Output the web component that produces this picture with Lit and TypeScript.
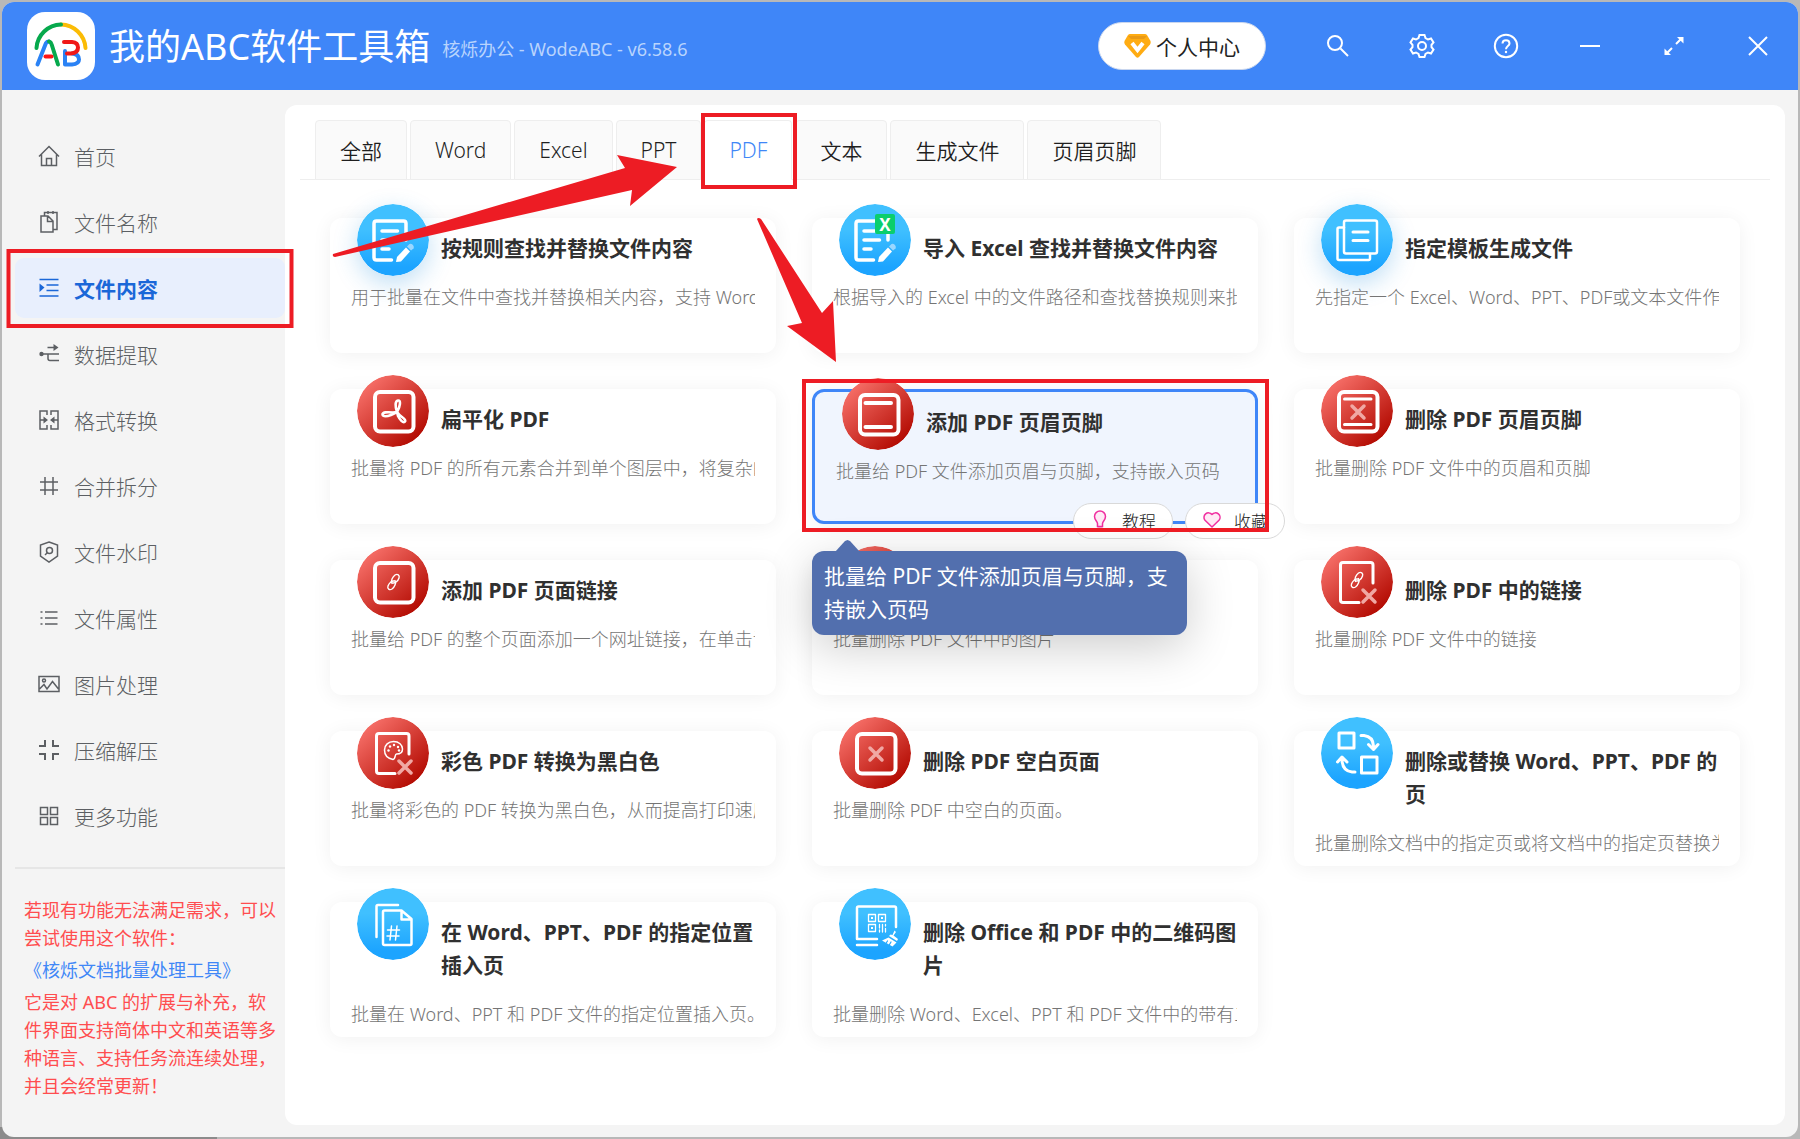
import { LitElement, html, svg, css, nothing, TemplateResult, SVGTemplateResult } from "lit";
import { customElement, property, state } from "lit/decorators.js";
import { classMap } from "lit/directives/class-map.js";

const shared = css`
  button { font: inherit; color: inherit; border: 0; background: none; padding: 0; cursor: pointer; }
  a { color: inherit; text-decoration: none; }
  svg { display: block; flex: none; }
`;

/* ---------- sidebar glyphs, drawn around the centre of a 24px box ---------- */
const navGlyphs: Record<string, SVGTemplateResult> = {
  home: svg`<path d="M-10 .5 0-9.5 10 .5M-7.5-1.5V9.5H7.5V-1.5M-2.5 9.5V2.5H2.5V9.5"/>`,
  files: svg`<path d="M-8-6H-1L4-1V10H-8ZM-1.5-6V-.5H4M-4.500-6V-9.500H8V7.500H4.500M-1-11V-8M4-11V-8"/>`,
  content: svg`<path d="M-9.500-8.500H9.500M-2.500-3H9.500M-2.500 2.500H9.500M-9.500 8H9.500"/><path class="solid" d="M-9.500-4.500-4.500-.5-9.500 4Z"/>`,
  extract: svg`<circle class="solid" cx="-7.500" cy="0" r="2.200"/><path d="M-7.500 0H10M-1.500-6.500H6M-1 0V4.500Q-1 6.500 1 6.500H10"/><path class="solid" d="M4.500-10 9.500-6.500 4.500-3Z"/>`,
  convert: svg`<path d="M-2-5V-9H-9V9H-2V5M2-5V-9H9V9H2V5M-9 0H-4M9 0H4"/><path class="solid" d="M-5.500-3.500-1 0-5.500 3.500ZM5.500-3.500 1 0 5.500 3.500Z"/>`,
  hash: svg`<path d="M-4-9V9M4-9V9M-9-4H9M-9 4H9"/>`,
  shield: svg`<path d="M0-10 8.500-7V4L0 10-8.500 4V-7Z"/><circle cx=".5" cy="-1.500" r="3"/><path d="M-1.500 .5-4 3"/>`,
  list: svg`<path d="M-4-6H8.500M-4 0H8.500M-4 6H8.500M-8.500-6H-6.500M-8.500 0H-6.500M-8.500 6H-6.500"/>`,
  image: svg`<path d="M-10-7.500H10V7.500H-10ZM-9.500 5-5 .5-2 5 3.500-2.500 9.500 5"/><circle cx="-5" cy="-3.500" r="1.500"/>`,
  zip: svg`<path d="M-10-4H-4V-10M10-4H4V-10M-10 4H-4V10M10 4H4V10" stroke-width="2"/>`,
  more: svg`<path d="M-8.500-8.500H-1.500V-1.500H-8.500ZM1.500-8.500H8.500V-1.500H1.500ZM-8.500 1.500H-1.500V8.500H-8.500ZM1.500 1.500H8.500V8.500H1.500Z"/>`,
};

/* ---------- card glyphs, drawn in the 72px disc ---------- */
const frame = svg`<rect x="18" y="17" width="38.500" height="39.500" rx="5" stroke-width="4"/>`;
const chain = (x: number, y: number) => svg`<g transform="translate(${x} ${y})" stroke-width="1.400">
  <path d="M-1.500 1.500C-3-1 -1-5 1.500-7 4-8.500 6.500-7 5.500-4 4.500-1 1.500 1.500-.5 1"/>
  <path d="M1.500-1.500C3 1 1 5-1.500 7-4 8.500-6.500 7-5.500 4-4.500 1-1.500-1.500 .5-1"/></g>`;
const cross = (x: number, y: number, r = 6) => svg`<path class="faint" stroke-width="3.500" d="M${x - r} ${y - r}L${x + r} ${y + r}M${x + r} ${y - r}L${x - r} ${y + r}"/>`;
const openDoc = svg`<path stroke-width="3" d="M52 37V19Q52 16.500 49.500 16.500H22Q19.500 16.500 19.500 19V54Q19.500 56.500 22 56.500H38"/>`;
const pencil = svg`<path class="solid" d="M39 58 40 53 49 43.500 53 47.500 44 57.500Z"/><path class="solid soft" d="M50 42.500 52.500 40Q54 39 56 41 57.500 43 56.500 44.500L54 46.500Z"/>`;
const editDoc = svg`<path stroke-width="3.500" d="M49 36V19.500Q49 17 46.500 17H19.500Q17 17 17 19.500V53.500Q17 56 19.500 56H34.500M25 27H40.500M25 36H40.500M25 45H32"/>${pencil}`;

const cardGlyphs: Record<string, SVGTemplateResult> = {
  edit: editDoc,
  editExcel: svg`${editDoc}<rect x="36" y="10" width="20" height="20" rx="2" fill="#0bce6d" stroke="none"/><text x="46" y="26.500" text-anchor="middle" class="badge">X</text>`,
  template: svg`<path stroke-width="2.500" d="M23 23.500H18Q16.500 23.500 16.500 25V54.500Q16.500 56 18 56H47.500Q49 56 49 54.500V50"/><rect x="23" y="16.500" width="33" height="33" rx="2" stroke-width="2.500"/><path stroke-width="3" d="M32 28H47M32 36.500H47"/>`,
  flatten: svg`${frame}<path stroke-width="2.600" d="M40 37C38 31 38 26 41 25.500S43.500 31 40 37Q38 38.500 34 40C30 41.500 26 42 25.500 39.500S31 37 36 37.500Q38 37 40 37 42 40 45 42C48 44 49 46 47.500 47S43 45 41 41Q40.500 39 40 37Z"/>`,
  header: svg`${frame}<path stroke-width="4" d="M23.500 25H49M23.500 49H49"/>`,
  headerDel: svg`${frame}<path stroke-width="3" d="M23.500 24H50M23.500 49.500H50"/>${cross(37, 37)}`,
  link: svg`${frame}${chain(36.500, 36)}`,
  linkDel: svg`${openDoc}${chain(36, 34)}${cross(48, 50)}`,
  picture: svg`${frame}<path stroke-width="2.500" d="M23 48 32 36 38 43 43 38 50 47"/>`,
  palette: svg`${openDoc}<path stroke-width="1.500" d="M36 42.500C31 41.500 27.500 38 27.500 33 27.500 28 31.500 24.500 36.500 24.500 42 24.500 45.500 28 45.500 32 45.500 36 42 37 39.500 37 37.500 37 39 42 36 42.500Z"/><g class="solid"><circle cx="31.500" cy="33.500" r="1.200"/><circle cx="33" cy="29.500" r="1.200"/><circle cx="37" cy="28" r="1.200"/><circle cx="41" cy="30" r="1.200"/><circle cx="42" cy="33.500" r="1.200"/></g>${cross(48, 50)}`,
  blank: svg`${frame}${cross(37, 37)}`,
  replace: svg`<path stroke-width="3" d="M18 16H33V31H18ZM40.500 40H56V56H40.500ZM40 18.500H43Q52 19.500 52.500 29M47.500 27.500 52.500 32.500 57 27.500M34 55H31Q21.500 54 21 43M16.500 45 21 40 26 45"/>`,
  insert: svg`<path stroke-width="2.500" d="M41 17H21Q19.500 17 19.500 18.500V49M27.500 22.500H44.500L54.500 31V55.500Q54.500 57 53 57H27.500Q26 57 26 55.500V24Q26 22.500 27.500 22.500ZM44.500 23V31.500H54"/><path stroke-width="1.500" d="M34.500 38 33 52M40 38 38.500 52M30.500 42H42.500M30 48H42"/>`,
  qr: svg`<path stroke-width="2.500" d="M57 39V20Q57 18.500 55.500 18.500H19.500Q18 18.500 18 20V51H38M18 57H38"/><path stroke-width="1.300" d="M29.500 26.500H36.500V33.500H29.500ZM39.500 26.500H46.500V33.500H39.500ZM29.500 36.500H36.500V43.500H29.500ZM40.500 36.500V40M40.500 42V44M43.500 36.500V44M46.500 36.500V38M46.500 40.500V44"/><path class="solid" d="M32 29H34V31H32ZM42 29H44V31H42ZM32 39H34V41H32Z"/><path class="solid" d="M55.500 42.500 57 44 54.500 47.500 59 51 58 53 50 48 51.500 46.500 53.500 47ZM49.500 49.500 57.500 54.500 53.500 58.500 43 52.500Z"/><path d="M48.500 53 47.500 54.500M52 54 50.500 56.500" stroke="#1ea5ff" stroke-width="1.200"/>`,
};

interface Tool {
  title: string;
  text: string;
  glyph: string;
  red?: boolean;
  glow?: boolean;
  active?: boolean;
}

const tools: Tool[] = [
  { title: "按规则查找并替换文件内容", text: "用于批量在文件中查找并替换相关内容，支持 Word", glyph: "edit", glow: true },
  { title: "导入 Excel 查找并替换文件内容", text: "根据导入的 Excel 中的文件路径和查找替换规则来批", glyph: "editExcel" },
  { title: "指定模板生成文件", text: "先指定一个 Excel、Word、PPT、PDF或文本文件作为", glyph: "template", glow: true },
  { title: "扁平化 PDF", text: "批量将 PDF 的所有元素合并到单个图层中，将复杂的", glyph: "flatten", red: true },
  { title: "添加 PDF 页眉页脚", text: "批量给 PDF 文件添加页眉与页脚，支持嵌入页码", glyph: "header", red: true, active: true },
  { title: "删除 PDF 页眉页脚", text: "批量删除 PDF 文件中的页眉和页脚", glyph: "headerDel", red: true },
  { title: "添加 PDF 页面链接", text: "批量给 PDF 的整个页面添加一个网址链接，在单击该", glyph: "link", red: true },
  { title: "删除 PDF 中的图片", text: "批量删除 PDF 文件中的图片", glyph: "picture", red: true },
  { title: "删除 PDF 中的链接", text: "批量删除 PDF 文件中的链接", glyph: "linkDel", red: true },
  { title: "彩色 PDF 转换为黑白色", text: "批量将彩色的 PDF 转换为黑白色，从而提高打印速度", glyph: "palette", red: true },
  { title: "删除 PDF 空白页面", text: "批量删除 PDF 中空白的页面。", glyph: "blank", red: true },
  { title: "删除或替换 Word、PPT、PDF 的\n页", text: "批量删除文档中的指定页或将文档中的指定页替换为", glyph: "replace" },
  { title: "在 Word、PPT、PDF 的指定位置\n插入页", text: "批量在 Word、PPT 和 PDF 文件的指定位置插入页。", glyph: "insert" },
  { title: "删除 Office 和 PDF 中的二维码图\n片", text: "批量删除 Word、Excel、PPT 和 PDF 文件中的带有二", glyph: "qr" },
];

@customElement("tool-card")
class ToolCard extends LitElement {
  @property({ attribute: false }) tool!: Tool;

  static styles = [
    shared,
    css`
      :host { display: block; min-width: 0; }
      .card {
        box-sizing: border-box; position: relative; height: 135px; padding: 0 21px;
        border-radius: 12px; background: #fff; box-shadow: 0 2px 20px rgba(0, 0, 0, 0.06);
      }
      .card.active { background: #f0f5fe; border: 3px solid #3f86f8; }
      .head { display: flex; align-items: flex-start; }
      .disc { width: 72px; height: 72px; margin: -14px 12px -14px 6px; border-radius: 50%; }
      .disc.glow { box-shadow: 0 8px 24px rgba(30, 140, 220, 0.28); }
      .glyph { fill: none; stroke: #fff; stroke-linecap: round; stroke-linejoin: round; }
      .solid { fill: #fff; stroke: none; }
      .soft { fill: #9ad7ff; }
      .faint { stroke: #f0a8a4; }
      .badge { font: 700 17px "Noto Sans", sans-serif; fill: #fff; stroke: none; }
      .title { flex: 1; margin: 0; padding-top: 14px; font-size: 21px; line-height: 33px; font-weight: 700; color: #303030; white-space: pre; }
      .text { margin: 18px 0 0; font-size: 18px; line-height: 28px; font-weight: 300; color: #757575; white-space: nowrap; overflow: hidden; }
      .actions { position: absolute; z-index: 2; right: -30px; bottom: -18px; display: flex; gap: 12px; }
      .pill {
        display: flex; align-items: center; gap: 12px; box-sizing: border-box; height: 36px; padding: 0 16px 2px;
        border: 1px solid #d9d9d9; border-radius: 18px; background: #fff; font-size: 17px; font-weight: 300; color: #222;
      }
      .tip {
        position: absolute; z-index: 3; left: -3px; top: 159px; box-sizing: border-box; width: 375px; padding: 9px 12px;
        border-radius: 12px; background: #526fae; color: #fff; font-size: 21px; line-height: 33px;
        box-shadow: 0 12px 48px rgba(0, 0, 0, 0.2);
      }
      .tip::before {
        content: ""; position: absolute; left: 23px; top: -11px; width: 25px; height: 12px;
        background: #526fae; clip-path: polygon(0 100%, 40% 8%, 50% 0, 60% 8%, 100% 100%);
      }
    `,
  ];

  private renderExtras(): TemplateResult {
    return html`
      <div class="actions">
        <button class="pill">
          <svg width="20" height="20" viewBox="0 0 20 20" fill="#ffeaf5" stroke="#f02fa0" stroke-width="1.500"><path d="M7.500 13.500C7.500 11.500 4.500 10 4.500 6.500A5.500 5.500 0 0 1 15.500 6.500C15.500 10 12.500 11.500 12.500 13.500V16.500H7.500ZM7.500 18.500H12.500"/></svg>
          教程
        </button>
        <button class="pill">
          <svg width="20" height="20" viewBox="0 0 20 20" fill="#ffeaf5" stroke="#f02fa0" stroke-width="1.500" stroke-linejoin="round"><path d="M10 17 3 10.300A4.500 4.500 0 0 1 10 4.500 4.500 4.500 0 0 1 17 10.300Z"/></svg>
          收藏
        </button>
      </div>
      <div class="tip" role="tooltip">${this.tool.text}</div>
    `;
  }

  render() {
    const t = this.tool;
    const stops = t.red
      ? svg`<linearGradient id="g" x1=".12" y1=".1" x2=".82" y2=".9"><stop offset="0" stop-color="#f8716a"/><stop offset="1" stop-color="#b30b02"/></linearGradient>`
      : svg`<linearGradient id="g" x1="0" y1="0" x2="0" y2="1"><stop offset=".35" stop-color="#40c0ff"/><stop offset=".88" stop-color="#1ca4ff"/></linearGradient>`;
    return html`
      <article class=${classMap({ card: true, active: !!t.active })}>
        <div class="head">
          <svg class=${classMap({ disc: true, glow: !!t.glow })} viewBox="0 0 72 72" aria-hidden="true">
            <defs>${stops}</defs>
            <circle cx="36" cy="36" r="36" fill="url(#g)"/>
            <g class="glyph">${cardGlyphs[t.glyph]}</g>
          </svg>
          <h3 class="title"><a href="#">${t.title}</a></h3>
        </div>
        <p class="text">${t.text}</p>
        ${t.active ? this.renderExtras() : nothing}
      </article>
    `;
  }
}

const navItems: [string, string][] = [
  ["首页", "home"], ["文件名称", "files"], ["文件内容", "content"], ["数据提取", "extract"],
  ["格式转换", "convert"], ["合并拆分", "hash"], ["文件水印", "shield"], ["文件属性", "list"],
  ["图片处理", "image"], ["压缩解压", "zip"], ["更多功能", "more"],
];
const tabs = ["全部", "Word", "Excel", "PPT", "PDF", "文本", "生成文件", "页眉页脚"];

const windowButtons: [string, SVGTemplateResult][] = [
  ["搜索", svg`<circle cx="-3" cy="-3" r="7"/><path d="M2.500 2.500 10 10"/>`],
  ["设置", svg`<path d="M-2.500-11H2.500L3.500-8 6-6.500 9-7.500 11.500-3.500 9.500-1.200V1.200L11.500 3.500 9 7.500 6 6.500 3.500 8 2.500 11H-2.500L-3.500 8-6 6.500-9 7.500-11.500 3.500-9.500 1.200V-1.200L-11.500-3.500-9-7.500-6-6.500-3.500-8Z"/><circle r="4"/>`],
  ["帮助", svg`<circle r="11.200"/><path d="M-3.500-2.500C-3.500-7 3.500-7 3.500-2.500 3.500 0 0 .2 0 3.200"/><circle cy="6" r="1.200" fill="#fff" stroke="none"/>`],
  ["最小化", svg`<path d="M-10 0H10"/>`],
  ["最大化", svg`<path d="M2-2 7-7M-2 2-7 7"/><path d="M3-9H9.500V-2.500ZM-3 9H-9.500V2.500Z" fill="#fff" stroke="none"/>`],
  ["关闭", svg`<path d="M-9-9 9 9M9-9-9 9"/>`],
];

@customElement("app-root")
class AppRoot extends LitElement {
  @state() private page = "文件内容";
  @state() private tab = "PDF";

  static styles = [
    shared,
    css`
      :host {
        display: flex; box-sizing: border-box; position: relative; min-height: 100vh; padding: 2px;
        background: linear-gradient(#8b8b8b, #8b8b8b) 0 100% / 217px 12px no-repeat, #b8b8b8;
        font-family: "Noto Sans", "Noto Sans CJK SC", sans-serif; color: #222;
      }
      .window { flex: 1; min-width: 0; display: flex; flex-direction: column; border-radius: 12px; overflow: hidden; background: #f4f4f4; }

      .bar { display: flex; align-items: center; height: 88px; padding-left: 24px; background: #3f86f8; color: #fff; }
      .name { margin: 0 0 0 13px; padding-top: 2px; font-size: 36px; line-height: 48px; font-weight: 400; white-space: nowrap; }
      .version { margin-left: 12px; padding-top: 4px; font-size: 18px; color: #b9d4fd; white-space: nowrap; }
      .controls { display: flex; align-items: center; margin: 0 -2px 0 auto; }
      .account {
        display: flex; align-items: center; gap: 5px; height: 48px; margin-right: 30px; padding: 0 25px;
        border: 1px solid #c9d6ee; box-sizing: border-box; border-radius: 24px; background: #fff; color: #222; font-size: 21px;
      }
      .tool { width: 84px; height: 60px; display: grid; place-items: center; }
      .tool svg { fill: none; stroke: #fff; stroke-width: 2; }

      .body { flex: 1; display: flex; min-height: 0; }
      .side { width: 283px; flex: none; padding-top: 36px; }
      .nav { display: flex; flex-direction: column; gap: 6px; padding-left: 13px; }
      .item { display: flex; align-items: center; gap: 13px; height: 60px; padding-left: 22px; border-radius: 9px; font-size: 21px; font-weight: 300; color: #5c5f63; }
      .item svg { fill: none; stroke: currentColor; stroke-width: 1.5; }
      .item .solid { fill: currentColor; stroke: none; }
      .item.on { background: #e8effd; color: #1a67d8; font-weight: 700; }
      .promo { margin: 21px 0 0 13px; padding: 27px 8px 0 9px; border-top: 2px solid #e6e6e6; font-size: 18px; line-height: 28px; color: #ff4d4f; }
      .promo p { margin: 0; }
      .promo a { display: block; line-height: 36px; color: #4087f7; }

      .panel { flex: 1; min-width: 0; margin: 15px 13px 12px 0; padding: 15px 15px 0; border-radius: 12px; background: #fff; }
      .tabs { display: flex; gap: 3px; padding-left: 15px; border-bottom: 1px solid #eee; }
      .tab {
        box-sizing: border-box; height: 60px; margin-bottom: -1px; padding: 0 24px; border: 1px solid #eee; border-radius: 4px 4px 0 0;
        background: #fafafa; font-size: 21px; font-weight: 350; color: #1f1f1f;
      }
      .tab.on { background: #fff; border-bottom-color: #fff; color: #4087f7; }
      .cards { display: grid; grid-template-columns: repeat(3, minmax(0, 1fr)); gap: 36px; padding: 38px 30px; }

      .marks { position: absolute; inset: 0; width: 100%; height: 100%; z-index: 5; pointer-events: none; }
      .marks rect { fill: none; stroke: #ed1c24; stroke-width: 4; }
      .marks path { fill: #ed1c24; }
    `,
  ];

  private renderBar() {
    return html`
      <header class="bar">
        <svg width="70" height="70" viewBox="0 0 70 70" fill="none" stroke-linecap="round" stroke-linejoin="round" aria-hidden="true">
          <rect x="1" y="1" width="68" height="68" rx="18" fill="#fff"/>
          <path d="M35 13.500A25 25 0 0 1 59.500 37" stroke="#fbbc05" stroke-width="4"/>
          <path d="M10.500 37A25 25 0 0 1 35 13.500" stroke="#06a94d" stroke-width="4"/>
          <path d="M11.500 53.500 20 32Q21 30.500 23 30.500" stroke="#2a82f5" stroke-width="4"/>
          <path d="M23 30.500Q25 31 25.500 33L32 53.500" stroke="#06a94d" stroke-width="4"/>
          <path d="M19.500 45.500H25.500" stroke="#ff1414" stroke-width="4"/>
          <path d="M39 40V53.500H46Q53 53 53 48.500 53 43 46 42.500" stroke="#2a82f5" stroke-width="4"/>
          <path d="M38 31H46Q52 31.500 52 36.500 52 42 45 42.500H41" stroke="#f01818" stroke-width="4"/>
        </svg>
        <h1 class="name">我的ABC软件工具箱</h1>
        <span class="version">核烁办公 - WodeABC - v6.58.6</span>
        <div class="controls">
          <button class="account">
            <svg width="27" height="24" viewBox="0 0 27 24"><path d="M6 0H21Q22 0 23 1L26.500 7Q27 9 26 10.500L15 23Q13.500 24.500 12 23L1 10.500Q0 9 .5 7L4 1Q5 0 6 0Z" fill="#ffac12"/><path d="M4 2H23L20 5H7Z" fill="#e99a16"/><path d="M8 9 13.500 16 19 9" fill="none" stroke="#fff" stroke-width="4"/></svg>
            个人中心
          </button>
          ${windowButtons.map(([label, glyph]) => html`
            <button class="tool" aria-label=${label}><svg width="26" height="26" viewBox="-13 -13 26 26">${glyph}</svg></button>`)}
        </div>
      </header>
    `;
  }

  private renderSide() {
    return html`
      <aside class="side">
        <nav class="nav">
          ${navItems.map(([label, glyph]) => html`
            <a href="#" class=${classMap({ item: true, on: label === this.page })} @click=${() => (this.page = label)}>
              <svg width="24" height="24" viewBox="-12 -12 24 24" aria-hidden="true">${navGlyphs[glyph]}</svg>${label}
            </a>`)}
        </nav>
        <div class="promo">
          <p>若现有功能无法满足需求，可以尝试使用这个软件：</p>
          <a href="#">《核烁文档批量处理工具》</a>
          <p>它是对 ABC 的扩展与补充，软件界面支持简体中文和英语等多种语言、支持任务流连续处理，并且会经常更新！</p>
        </div>
      </aside>
    `;
  }

  render() {
    return html`
      <div class="window">
        ${this.renderBar()}
        <div class="body">
          ${this.renderSide()}
          <main class="panel">
            <div class="tabs" role="tablist">
              ${tabs.map((label) => html`
                <button role="tab" aria-selected=${label === this.tab} class=${classMap({ tab: true, on: label === this.tab })}
                  @click=${() => (this.tab = label)}>${label}</button>`)}
            </div>
            <div class="cards">${tools.map((tool) => html`<tool-card .tool=${tool}></tool-card>`)}</div>
          </main>
        </div>
      </div>
      <svg class="marks" aria-hidden="true">
        <rect x="8.500" y="251" width="283" height="75"/>
        <rect x="703" y="115" width="92" height="72"/>
        <rect x="804" y="381" width="463" height="149"/>
        <path d="M333 254 625 168 617 155 677 167 630 206 632 190 335 257Q332 257 333 254Z"/>
        <path d="M757 219Q758 217 761 219L822 313 833 301 836 362 787 326 802 323Z"/>
      </svg>
    `;
  }
}
